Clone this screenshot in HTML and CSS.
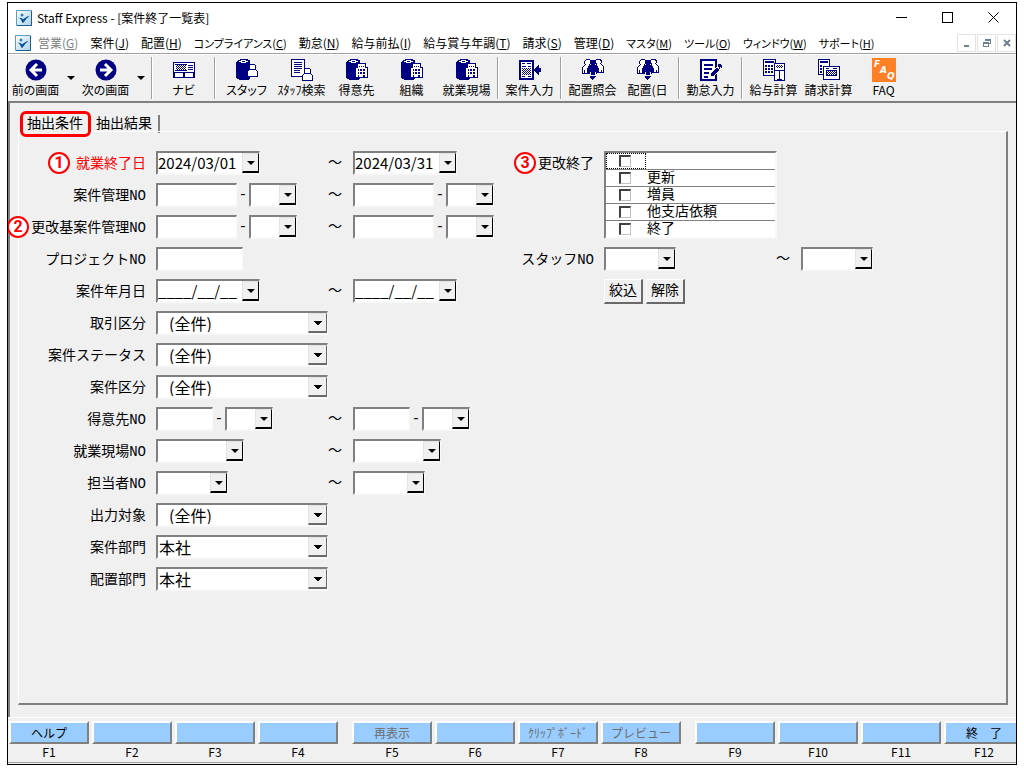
FILE: index.html
```html
<!DOCTYPE html>
<html lang="ja">
<head>
  <meta charset="UTF-8" />
  <meta name="viewport" content="width=device-width, initial-scale=1.0"/>
  <title>Staff Express - [案件終了一覧表]</title>
  <link rel="stylesheet" href="styles.css">
</head>
<body>
  <!-- shared icon parts -->
  <svg class="defs" aria-hidden="true">
    <defs>
      <pattern id="hatch" width="2" height="2" patternUnits="userSpaceOnUse">
        <path d="M0 0h1v1H0zM1 1h1v1H1z" fill="#000080"/>
      </pattern>
      <linearGradient id="logo-fill" x1="0" y1="0" x2="1" y2="1">
        <stop offset="0" stop-color="#ffffff"/>
        <stop offset="1" stop-color="#a9d3ea"/>
      </linearGradient>
      <symbol id="logo" viewBox="0 0 16 16">
        <path d="M.5.5h15v15H.5z" fill="url(#logo-fill)" stroke="#5b9cc4"/>
        <path d="M15.500 1v14.500H1" fill="none" stroke="#1d5f93"/>
        <circle cx="6" cy="5" r="1.500" fill="#2c7fc0"/>
        <path d="M2.500 7.500c2 0 3.500.8 4.500 1.800 2-1.500 4-3 6.500-3.600-2.300 2-4.300 4.300-6 7H6.300C5.800 10.800 4.500 8.800 2.500 7.500z" fill="#0d559c"/>
      </symbol>
      <symbol id="cylinder" viewBox="0 0 22 22">
        <path d="M2 1h2V0h8v1h2v19h-1v1H3v-1H1v-1H0V3h1V2h1z" fill="#000080"/>
        <path d="M5 1h5v1h2v1h-2v1H5V3H3V2h2z" fill="#fff"/>
        <path d="M6 2h3v1H6z" fill="#000080"/>
      </symbol>
      <symbol id="person" viewBox="0 0 11 13">
        <path d="M3.500.5h4l1 1v3l-1 1h1l2 2v5H.500v-5l2-2h1l-1-1v-3z" fill="#fff" stroke="#000080"/>
        <path d="M4 5.500h3" fill="none" stroke="#000080"/>
      </symbol>
      <symbol id="staff" viewBox="0 0 22 22">
        <use href="#cylinder" width="22" height="22"/>
        <use href="#person" x="11" y="5" width="11" height="13"/>
      </symbol>
      <symbol id="building" viewBox="0 0 22 22">
        <use href="#cylinder" width="22" height="22"/>
        <path d="M11.500 4.500h8v4h2v10h-12v-10h2z" fill="#fff" stroke="#000080"/>
        <path d="M13 7h1v1h-1zM15 7h1v1h-1zM17 7h1v1h-1zM12 10h1v2h-1zM14 10h2v2h-2zM17 10h2v2h-2zM12 13h1v2h-1zM14 13h2v2h-2zM17 13h2v2h-2zM12 16h1v2h-1zM17 16h2v2h-2z" fill="#000080"/>
      </symbol>
      <symbol id="people" viewBox="0 0 22 22">
        <path d="M4.500.5h3l1 1v3l-1 1v9h-7v-6l3-3-1-1v-2zM14.500.5h3l2 1v2l-1 1 3 3v6h-7v-9l-1-1v-2z" fill="#fff" stroke="#000080"/>
        <path d="M9 1h4v1h1v3h-1v1h1v1h2v2h1v5h-2v1h-1v-2h-1v3H9v-3H8v2H7v-1H5V9h1V7h2V6h1V5H8V2h1zM8 17h6v1h-1v1h-1v1h-1v1h-1v-1H9v-1H8z" fill="#000080"/>
        <path d="M2.500 11v3M19.500 11v3" stroke="#000080"/>
      </symbol>
    </defs>
  </svg>

  <div class="window">
    <header class="titlebar">
      <svg class="logo"><use href="#logo"/></svg>
      <h1 class="title">Staff Express - [案件終了一覧表]</h1>
      <div class="window-buttons">
        <button type="button" aria-label="最小化"><svg viewBox="0 0 11 11"><path d="M0 5.500h11"/></svg></button>
        <button type="button" aria-label="最大化"><svg viewBox="0 0 11 11"><path d="M.5.5h10v10H.5z"/></svg></button>
        <button type="button" aria-label="閉じる"><svg viewBox="0 0 11 11" class="smooth"><path d="M.5.5l10 10M10.500.5l-10 10"/></svg></button>
      </div>
    </header>

    <nav class="menubar">
      <svg class="logo"><use href="#logo"/></svg>
      <button type="button" class="menu" disabled>営業(<u>G</u>)</button>
      <button type="button" class="menu">案件(<u>J</u>)</button>
      <button type="button" class="menu">配置(<u>H</u>)</button>
      <button type="button" class="menu kana">コンプライアンス(<u>C</u>)</button>
      <button type="button" class="menu">勤怠(<u>N</u>)</button>
      <button type="button" class="menu">給与前払(<u>I</u>)</button>
      <button type="button" class="menu">給与賞与年調(<u>T</u>)</button>
      <button type="button" class="menu">請求(<u>S</u>)</button>
      <button type="button" class="menu">管理(<u>D</u>)</button>
      <button type="button" class="menu kana">マスタ(<u>M</u>)</button>
      <button type="button" class="menu kana">ツール(<u>O</u>)</button>
      <button type="button" class="menu kana">ウィンドウ(<u>W</u>)</button>
      <button type="button" class="menu kana">サポート(<u>H</u>)</button>
      <div class="mdi-buttons">
        <button type="button" aria-label="最小化"><svg viewBox="0 0 10 10"><path d="M2 8h5"/></svg></button>
        <button type="button" aria-label="元に戻す"><svg viewBox="0 0 10 10"><path class="thin" d="M1.500 4.500h5v4h-5zM1 5.500h6M3.500 3V1.500h5v4H7M3 2.500h6"/></svg></button>
        <button type="button" aria-label="閉じる"><svg viewBox="0 0 10 10" class="smooth"><path d="M2 2l6 6M8 2l-6 6"/></svg></button>
      </div>
    </nav>

    <div class="toolbar">
      <button type="button" class="tool">
        <svg viewBox="0 0 22 22" class="smooth"><circle cx="11" cy="11" r="10.500" fill="#000080"/><path d="M12 5l-6 6 6 6M6.500 11H17" fill="none" stroke="#fff" stroke-width="3"/></svg>
        前の画面
      </button>
      <button type="button" class="tool-arrow" aria-label="前の画面の履歴"></button>
      <button type="button" class="tool">
        <svg viewBox="0 0 22 22" class="smooth"><circle cx="11" cy="11" r="10.500" fill="#000080"/><path d="M10 5l6 6-6 6M15.500 11H5" fill="none" stroke="#fff" stroke-width="3"/></svg>
        次の画面
      </button>
      <button type="button" class="tool-arrow" aria-label="次の画面の履歴"></button>
      <span class="sep"></span>
      <button type="button" class="tool">
        <svg viewBox="0 0 22 22"><path d="M.5 3.500h21v15H.5z" fill="#fff" stroke="#000080"/><path d="M3 6h10v5H3z" fill="url(#hatch)"/><path d="M2 5.500h12M2 11.500h12M15 6.500h5M15 8.500h5M15 10.500h5" stroke="#000080"/><path d="M1 13h20v5H1z" fill="#000080"/><path d="M2 14h8v4H2zM12 14h8v4h-8z" fill="#fff"/></svg>
        ナビ
      </button>
      <span class="sep"></span>
      <button type="button" class="tool"><svg><use href="#staff"/></svg>スタッフ</button>
      <button type="button" class="tool">
        <svg viewBox="0 0 22 22"><path d="M.5.5h13v17H.5z" fill="#fff" stroke="#000080"/><path d="M3 3.500h8M3 5.500h8M3 7.500h8M3 9.500h8M3 11.500h6M3 13.500h6" stroke="#000080"/><use href="#person" x="11" y="9" width="11" height="13"/></svg>
        ｽﾀｯﾌ検索
      </button>
      <button type="button" class="tool"><svg><use href="#building"/></svg>得意先</button>
      <button type="button" class="tool"><svg><use href="#building"/></svg>組織</button>
      <button type="button" class="tool"><svg><use href="#building"/></svg>就業現場</button>
      <span class="sep"></span>
      <button type="button" class="tool">
        <svg viewBox="0 0 22 22"><path d="M1 2h13v18H1z" fill="#fff" stroke="#000080" stroke-width="2"/><path d="M3 4.500h3M8 4.500h4M3 7.500h4M9 7.500h3M3 17.500h3M9 17.500h3" stroke="#000080"/><path d="M3 9h9v7H3z" fill="url(#hatch)"/><path d="M15 10h1V9h1V8h1V7h1V6h1v3h2v4h-2v3h-1v-1h-1v-1h-1v-1h-1v-1h-1z" fill="#000080"/></svg>
        案件入力
      </button>
      <span class="sep"></span>
      <button type="button" class="tool"><svg><use href="#people"/></svg>配置照会</button>
      <button type="button" class="tool"><svg><use href="#people"/></svg>配置(日</button>
      <span class="sep"></span>
      <button type="button" class="tool">
        <svg viewBox="0 0 22 22"><path d="M1 1h15v20H1z" fill="#fff" stroke="#000080" stroke-width="2"/><path d="M4 6h9M4 10h8M4 14h5M4 18h4" stroke="#000080" stroke-width="2"/><path d="M10 18l1-4 6-6 3 3-6 6z" fill="#000080" stroke="#f0f0f0"/><path d="M18 5h3v1h1v3h-1V8h-1v2h-1V8h-1z" fill="#000080"/></svg>
        勤怠入力
      </button>
      <span class="sep"></span>
      <button type="button" class="tool">
        <svg viewBox="0 0 22 22"><path d="M.5.5h12v16H.5z" fill="#fff" stroke="#000080"/><path d="M2 2.500h9M2 3.500h9" stroke="#000080"/><path d="M2 6h2v2H2zM5 6h2v2H5zM8 6h2v2H8zM2 9h2v2H2zM5 9h2v2H5zM8 9h2v2H8zM2 12h2v2H2zM5 12h2v2H5zM8 12h2v2H8z" fill="#000080"/><path d="M11.500 4.500h10v17h-10z" fill="#fff" stroke="#000080"/><path d="M13 6h7v3h-7z" fill="url(#hatch)"/><path d="M12 11.500h9M16.500 12v8M14 20.500h5" stroke="#000080"/></svg>
        給与計算
      </button>
      <button type="button" class="tool">
        <svg viewBox="0 0 22 22"><path d="M.5.5h11v15H.5z" fill="#fff" stroke="#000080"/><path d="M2 2.500h8M2 3.500h8" stroke="#000080"/><path d="M2 6h2v2H2zM2 9h2v2H2zM2 12h2v2H2z" fill="#000080"/><path d="M5.500 7.500h16v13h-16z" fill="#fff" stroke="#000080"/><path d="M8 9.500h3M15 9.500h4" stroke="#000080"/><path d="M8.500 11.500h10v5h-10z" fill="url(#hatch)" stroke="#000080"/></svg>
        請求計算
      </button>
      <button type="button" class="tool">
        <svg viewBox="0 0 24 24" class="faq"><path d="M0 0h24v24H0z"/><text x="2" y="9">F</text><text x="8" y="15">A</text><text x="15" y="21">Q</text></svg>
        FAQ
      </button>
    </div>

    <main class="content">
      <div class="tabs" role="tablist">
        <button type="button" class="tab tab-marked" role="tab" aria-selected="true">抽出条件</button>
        <button type="button" class="tab" role="tab" aria-selected="false">抽出結果</button>
      </div>

      <form class="panel">
        <div class="col-left">
          <div class="row">
            <label class="required" for="end-from"><span class="mark">1</span>就業終了日</label>
            <div class="from"><span class="combo w-date"><input id="end-from" type="text" value="2024/03/01"><button type="button" aria-label="選択"></button></span><span class="tilde">～</span></div>
            <div class="to"><span class="combo w-date"><input type="text" aria-label="就業終了日 終了" value="2024/03/31"><button type="button" aria-label="選択"></button></span></div>
          </div>
          <div class="row">
            <label for="case-from">案件管理NO</label>
            <div class="from"><input id="case-from" class="box w-no" type="text"><span class="hyphen">-</span><span class="combo w-sub"><input type="text" aria-label="枝番"><button type="button" aria-label="選択"></button></span><span class="tilde">～</span></div>
            <div class="to"><input class="box w-no" type="text" aria-label="案件管理NO 終了"><span class="hyphen">-</span><span class="combo w-sub"><input type="text" aria-label="枝番"><button type="button" aria-label="選択"></button></span></div>
          </div>
          <div class="row">
            <label for="base-from"><span class="mark">2</span>更改基案件管理NO</label>
            <div class="from"><input id="base-from" class="box w-no" type="text"><span class="hyphen">-</span><span class="combo w-sub"><input type="text" aria-label="枝番"><button type="button" aria-label="選択"></button></span><span class="tilde">～</span></div>
            <div class="to"><input class="box w-no" type="text" aria-label="更改基案件管理NO 終了"><span class="hyphen">-</span><span class="combo w-sub"><input type="text" aria-label="枝番"><button type="button" aria-label="選択"></button></span></div>
          </div>
          <div class="row">
            <label for="project">プロジェクトNO</label>
            <div class="from"><input id="project" class="box w-project" type="text"></div>
          </div>
          <div class="row">
            <label for="date-from">案件年月日</label>
            <div class="from"><span class="combo w-date"><input id="date-from" type="text" value="____/__/__"><button type="button" aria-label="選択"></button></span><span class="tilde">～</span></div>
            <div class="to"><span class="combo w-date"><input type="text" aria-label="案件年月日 終了" value="____/__/__"><button type="button" aria-label="選択"></button></span></div>
          </div>
          <div class="row">
            <label for="deal">取引区分</label>
            <span class="combo list"><select id="deal" class="indent"><option>(全件)</option></select></span>
          </div>
          <div class="row">
            <label for="status">案件ステータス</label>
            <span class="combo list"><select id="status" class="indent"><option>(全件)</option></select></span>
          </div>
          <div class="row">
            <label for="kind">案件区分</label>
            <span class="combo list"><select id="kind" class="indent"><option>(全件)</option></select></span>
          </div>
          <div class="row">
            <label for="client-from">得意先NO</label>
            <div class="from"><input id="client-from" class="box w-client" type="text"><span class="hyphen">-</span><span class="combo w-sub"><input type="text" aria-label="枝番"><button type="button" aria-label="選択"></button></span><span class="tilde">～</span></div>
            <div class="to"><input class="box w-client" type="text" aria-label="得意先NO 終了"><span class="hyphen">-</span><span class="combo w-sub"><input type="text" aria-label="枝番"><button type="button" aria-label="選択"></button></span></div>
          </div>
          <div class="row">
            <label for="site-from">就業現場NO</label>
            <div class="from"><span class="combo w-site"><input id="site-from" type="text"><button type="button" aria-label="選択"></button></span><span class="tilde">～</span></div>
            <div class="to"><span class="combo w-site"><input type="text" aria-label="就業現場NO 終了"><button type="button" aria-label="選択"></button></span></div>
          </div>
          <div class="row">
            <label for="person-from">担当者NO</label>
            <div class="from"><span class="combo w-person"><input id="person-from" type="text"><button type="button" aria-label="選択"></button></span><span class="tilde">～</span></div>
            <div class="to"><span class="combo w-person"><input type="text" aria-label="担当者NO 終了"><button type="button" aria-label="選択"></button></span></div>
          </div>
          <div class="row">
            <label for="output">出力対象</label>
            <span class="combo list"><select id="output" class="indent"><option>(全件)</option></select></span>
          </div>
          <div class="row">
            <label for="case-dept">案件部門</label>
            <span class="combo list"><select id="case-dept"><option>本社</option></select></span>
          </div>
          <div class="row">
            <label for="place-dept">配置部門</label>
            <span class="combo list"><select id="place-dept"><option>本社</option></select></span>
          </div>
        </div>

        <div class="col-right">
          <div class="row" role="group" aria-labelledby="renewal">
            <span class="label" id="renewal"><span class="mark">3</span>更改終了</span>
            <ul class="checklist">
              <li><label class="current"><input type="checkbox" aria-label="空白"></label></li>
              <li><label><input type="checkbox">更新</label></li>
              <li><label><input type="checkbox">増員</label></li>
              <li><label><input type="checkbox">他支店依頼</label></li>
              <li><label><input type="checkbox">終了</label></li>
            </ul>
          </div>
          <div class="row">
            <label for="staff-from">スタッフNO</label>
            <div class="from"><span class="combo w-person"><input id="staff-from" type="text"><button type="button" aria-label="選択"></button></span><span class="tilde">～</span></div>
            <div class="to"><span class="combo w-person"><input type="text" aria-label="スタッフNO 終了"><button type="button" aria-label="選択"></button></span></div>
          </div>
          <div class="actions">
            <button type="button" class="btn">絞込</button>
            <button type="button" class="btn">解除</button>
          </div>
        </div>
      </form>
    </main>

    <footer class="fkeys">
      <div class="fgroup">
        <div class="fkey"><button type="button" id="f1">ヘルプ</button><label for="f1">F1</label></div>
        <div class="fkey"><button type="button" id="f2"></button><label for="f2">F2</label></div>
        <div class="fkey"><button type="button" id="f3"></button><label for="f3">F3</label></div>
        <div class="fkey"><button type="button" id="f4"></button><label for="f4">F4</label></div>
      </div>
      <div class="fgroup">
        <div class="fkey"><button type="button" id="f5" disabled>再表示</button><label for="f5">F5</label></div>
        <div class="fkey"><button type="button" id="f6"></button><label for="f6">F6</label></div>
        <div class="fkey"><button type="button" id="f7" disabled>ｸﾘｯﾌﾟﾎﾞｰﾄﾞ</button><label for="f7">F7</label></div>
        <div class="fkey"><button type="button" id="f8" disabled>プレビュー</button><label for="f8">F8</label></div>
      </div>
      <div class="fgroup">
        <div class="fkey"><button type="button" id="f9"></button><label for="f9">F9</label></div>
        <div class="fkey"><button type="button" id="f10"></button><label for="f10">F10</label></div>
        <div class="fkey"><button type="button" id="f11"></button><label for="f11">F11</label></div>
        <div class="fkey"><button type="button" id="f12">終　了</button><label for="f12">F12</label></div>
      </div>
    </footer>
  </div>
</body>
</html>
```

FILE: styles.css
```css
* { box-sizing: border-box; }
body {
  margin: 0;
  padding: 2px 7px 3px;
  min-height: 100vh;
  display: flex;
  background-color: #fff;
  color: #000;
  font-family: "Noto Sans CJK JP", sans-serif;
  font-size: 12px;
  line-height: 16px;
}
button, input, select {
  margin: 0;
  padding: 0;
  border: none;
  background: none;
  color: inherit;
  font: inherit;
}
svg {
  display: block;
  shape-rendering: crispEdges;
}
svg.smooth {
  shape-rendering: auto;
}
.defs {
  position: absolute;
  width: 0;
  height: 0;
}
.window {
  flex: 1;
  min-width: 0;
  display: flex;
  flex-direction: column;
  border: 1px solid #000;
  background-color: #f0f0f0;
  overflow: hidden;
}

/* title bar */
.titlebar {
  display: flex;
  align-items: center;
  height: 29px;
  padding-left: 8px;
  background-color: #fff;
}
.logo {
  width: 16px;
  height: 16px;
  flex: none;
  shape-rendering: auto;
}
.title {
  margin: 0 0 0 5px;
  font-size: 12px;
  font-weight: normal;
}
.window-buttons {
  display: flex;
  align-self: stretch;
  margin-left: auto;
}
.window-buttons button {
  width: 46px;
  display: flex;
  align-items: center;
  justify-content: center;
}
.window-buttons svg {
  width: 11px;
  height: 11px;
  fill: none;
  stroke: #000;
}

/* menu bar */
.menubar {
  display: flex;
  align-items: center;
  height: 21px;
  padding-left: 7px;
  background-color: #fff;
  font-feature-settings: "palt";
}
.menubar .logo {
  margin-right: 1px;
}
.menu {
  padding: 0 6px;
  white-space: nowrap;
}
.menu.kana {
  font-size: 11px;
}
.menu:disabled {
  color: #808080;
}
.mdi-buttons {
  display: flex;
  gap: 1px;
  margin-left: auto;
}
.mdi-buttons button {
  width: 19px;
  height: 18px;
  display: flex;
  align-items: center;
  justify-content: center;
  border: 1px solid #e3e3e3;
}
.mdi-buttons svg {
  width: 10px;
  height: 10px;
  fill: none;
  stroke: #708090;
  stroke-width: 2;
}
.mdi-buttons .thin {
  stroke-width: 1;
}

/* toolbar */
.toolbar {
  display: flex;
  height: 48px;
  padding-top: 3px;
  border-top: 1px solid #a0a0a0;
  box-shadow: inset 0 1px #fff;
  font-feature-settings: "palt";
}
.tool {
  width: 55px;
  flex: none;
  display: flex;
  flex-direction: column;
  align-items: center;
  gap: 1px;
  padding-top: 2px;
  white-space: nowrap;
}
.tool svg {
  width: 22px;
  height: 22px;
  flex: none;
}
.tool .faq {
  width: 24px;
  height: 24px;
  margin: -1px 0;
  fill: #ff7f27;
}
.faq text {
  fill: #fff;
  font-family: "DejaVu Sans", sans-serif;
  font-size: 9px;
  font-weight: bold;
  font-style: italic;
}
.tool-arrow {
  width: 15px;
  display: flex;
  justify-content: center;
  padding-top: 19px;
}
.tool-arrow::before,
.combo button::before {
  content: "";
  border: 4px solid transparent;
  border-top-color: #000;
  border-bottom: none;
}
.sep {
  width: 2px;
  height: 42px;
  margin: 0 3px;
  border-left: 1px solid #a0a0a0;
  border-right: 1px solid #fff;
}

/* tabs and panel */
.content {
  flex: 1;
  display: flex;
  flex-direction: column;
  padding: 8px 8px 12px;
  border-top: 2px solid #808080;
  border-left: 2px solid #808080;
  font-family: "Liberation Mono", "Noto Sans CJK JP", monospace;
  font-size: 14px;
}
.tabs {
  display: flex;
  gap: 5px;
  padding-left: 2px;
  height: 20px;
}
.tab {
  height: 26px;
  white-space: nowrap;
}
.tab + .tab {
  height: 18px;
  margin-top: 4px;
  padding: 0 6px 0 0;
  border-right: 2px solid #808080;
  line-height: 18px;
}
.tab-marked {
  position: relative;
  z-index: 1;
  border: 3px solid #f00;
  border-radius: 6px;
  padding: 0 5px 0 4px;
  background-color: #f0f0f0;
  line-height: 20px;
}
.panel {
  flex: 1;
  display: flex;
  padding-top: 19px;
  border: 1px solid #fff;
  border-right: 2px solid #808080;
  border-bottom: 2px solid #808080;
}
.col-left,
.col-right {
  display: flex;
  flex-direction: column;
  gap: 8px;
}
.col-left {
  width: 471px;
}
.row {
  display: flex;
}
.row > label,
.label {
  width: 127px;
  height: 24px;
  flex: none;
  display: flex;
  justify-content: flex-end;
  margin-right: 10px;
  line-height: 26px;
  white-space: nowrap;
}
.col-right .row > label,
.label {
  width: 104px;
}
.row > .required {
  color: #f00;
}
.from,
.to {
  display: flex;
  flex: none;
}
.from {
  width: 197px;
}
.hyphen {
  width: 12px;
  flex: none;
  line-height: 24px;
  text-align: center;
}
.tilde {
  margin-left: auto;
  padding-right: 11px;
  line-height: 24px;
}

/* numbered callouts beside labels */
.mark {
  width: 22px;
  height: 22px;
  margin: 1px 2px 0 0;
  flex: none;
  border: 2px solid #f00;
  border-radius: 50%;
  background-color: #fff;
  color: #f00;
  font-family: Roboto, sans-serif;
  font-size: 16px;
  font-weight: bold;
  line-height: 18px;
  text-align: center;
}
.required .mark {
  margin-right: 6px;
}

/* sunken fields */
.box,
.combo {
  height: 24px;
  flex: none;
  border: 2px solid #808080;
  border-right-color: #f8f8f8;
  border-bottom-color: #f8f8f8;
  border-right-width: 1px;
  background-color: #fff;
}
.combo {
  display: flex;
}
.combo input,
.combo select {
  flex: 1;
  min-width: 0;
  border-radius: 0;
  appearance: none;
  outline: none;
  font-family: "Noto Sans CJK JP", sans-serif;
  font-size: 15px;
  line-height: 20px;
}
.combo button,
.combo.list::after {
  width: 17px;
  flex: none;
  display: flex;
  align-items: center;
  justify-content: center;
  border: 1px solid #e3e3e3;
  border-right: 1px solid #000;
  border-bottom: 2px solid #000;
  background-color: #f0f0f0;
}
.combo.list {
  width: 172px;
  position: relative;
}
.combo.list select {
  padding-left: 1px;
  font-size: 16px;
  line-height: 18px;
}
.combo.list .indent {
  padding-left: 11px;
}
/* the select keeps its full width, the arrow button lies over its right end */
.combo.list::after {
  content: "";
  position: absolute;
  top: 0;
  right: 0;
  bottom: 0;
  border-color: #e3e3e3 #696969 #696969 #e3e3e3;
  background: #f0f0f0 conic-gradient(from -45deg at 50% 100%, #000 90deg, transparent 0) center / 8px 4px no-repeat;
  pointer-events: none;
}
.w-date { width: 104px; }
.w-no { width: 81px; }
.w-sub { width: 48px; }
.w-project { width: 87px; }
.w-client { width: 57px; }
.w-site { width: 88px; }
.w-person { width: 72px; }

/* check list */
.checklist {
  width: 173px;
  margin: 0;
  padding: 0;
  list-style: none;
  border: 2px solid #808080;
  border-right-color: #f8f8f8;
  border-bottom-color: #f8f8f8;
  background-color: #fff;
}
.checklist li {
  height: 17px;
  border-bottom: 1px solid #808080;
}
.checklist li:last-child {
  height: 16px;
  border-bottom: none;
}
.checklist label {
  display: flex;
  align-items: center;
  height: 16px;
  padding-left: 13px;
}
.checklist .current {
  width: 40px;
  padding-left: 12px;
  border: 1px dotted #000;
}
.checklist input {
  width: 12px;
  height: 12px;
  margin-right: 16px;
  flex: none;
  appearance: none;
  border: 2px solid #404040;
  border-right: 1px solid #c0c0c0;
  border-bottom: 1px solid #c0c0c0;
}
.actions {
  display: flex;
  gap: 3px;
  margin-left: 114px;
}
.btn {
  width: 39px;
  height: 25px;
  border: 1px solid #fff;
  border-right: 2px solid #696969;
  border-bottom: 2px solid #696969;
  white-space: nowrap;
}

/* function keys */
.fkeys {
  display: flex;
  gap: 14px;
  height: 46px;
  padding: 3px 0 0 1px;
  border-top: 1px solid #fff;
  border-bottom: 1px solid #a0a0a0;
  margin-bottom: 1px;
}
.fgroup {
  display: flex;
  gap: 3px;
}
.fkey {
  width: 80px;
  flex: none;
  display: flex;
  flex-direction: column;
  font-size: 12px;
  text-align: center;
}
.fkey button {
  height: 23px;
  border: 2px solid #fff;
  border-right-color: #808080;
  border-bottom-color: #808080;
  background-color: #99ccff;
  white-space: nowrap;
}
.fkey button:disabled {
  color: #6d6d6d;
}
```
